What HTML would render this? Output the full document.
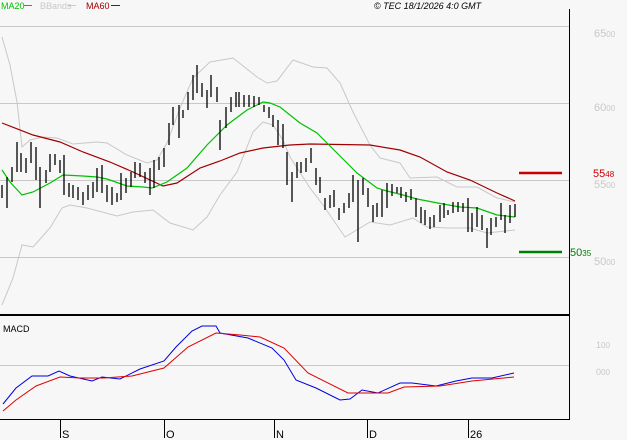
<!DOCTYPE html>
<html><head><meta charset="utf-8"><style>
html,body{margin:0;padding:0;background:#f7f7f7;}
svg{display:block;font-family:"Liberation Sans",sans-serif;}
</style></head><body>
<svg width="627" height="440" viewBox="0 0 627 440" xmlns="http://www.w3.org/2000/svg">
<rect width="627" height="440" fill="#f7f7f7"/>
<g font-size="9">
<text x="1" y="9" fill="#00c000">MA20</text><line x1="24" y1="5.5" x2="32" y2="5.5" stroke="#00c000"/>
<text x="40" y="9" fill="#c8c8c8">BBands</text><line x1="68" y1="5.5" x2="76" y2="5.5" stroke="#c8c8c8"/>
<text x="86" y="9" fill="#a00000">MA60</text><line x1="111" y1="5.5" x2="120" y2="5.5" stroke="#a00000"/>
<text x="374" y="9" fill="#000" font-style="italic">© TEC 18/1/2026 4:0 GMT</text>
</g>
<g stroke="#c8c8c8" stroke-width="1">
<line x1="0" y1="26.5" x2="569" y2="26.5"/>
<line x1="0" y1="103.5" x2="569" y2="103.5"/>
<line x1="0" y1="180.5" x2="569" y2="180.5"/>
<line x1="0" y1="257.5" x2="569" y2="257.5"/>
<line x1="0" y1="365.5" x2="569" y2="365.5"/>
</g>
<g fill="#c8c8c8" font-size="11">
<text x="594" y="37">65<tspan font-size="8">00</tspan></text>
<text x="594" y="111">60<tspan font-size="8">00</tspan></text>
<text x="594" y="188">55<tspan font-size="8">00</tspan></text>
<text x="594" y="265">50<tspan font-size="8">00</tspan></text>
<text x="596" y="348" font-size="9">1<tspan font-size="8">00</tspan></text>
<text x="596" y="375" font-size="9">0<tspan font-size="8">00</tspan></text>
</g>
<text x="593" y="177" fill="#c80000" font-size="11">55<tspan font-size="8">48</tspan></text>
<text x="570" y="256" fill="#008000" font-size="11">50<tspan font-size="8">35</tspan></text>
<line x1="519" y1="173" x2="562" y2="173" stroke="#c80000" stroke-width="2.5"/>
<line x1="519" y1="252" x2="562" y2="252" stroke="#008000" stroke-width="2.5"/>
<g fill="none" stroke="#c8c8c8" stroke-width="1">
<polyline points="2,37 10,65 17,102 22,147 30,140 43,137 57,138 73,144 97,142 107,143 127,155 147,163 157,160 167,143 180,108 193,78 210,62 233,58 257,77 267,83 277,81 293,60 313,67 327,68 340,83 353,112 370,145 380,158 400,163 410,178 437,177 457,187 477,187 497,198 515,202"/>
<polyline points="2,305 13,278 22,245 33,247 50,228 62,208 70,205 87,208 117,216 133,212 153,210 170,223 193,230 207,217 220,195 237,172 253,132 263,122 273,125 283,140 290,157 310,188 323,205 345,237 370,222 390,225 413,218 427,227 447,228 470,228 487,233 515,230"/>
</g>
<polyline fill="none" stroke="#a00000" stroke-width="1.2" points="2,123 33,135 60,142 83,152 110,162 133,172 163,186 177,183 200,168 220,161 240,153 263,148 290,145 310,144 370,145 400,150 420,157 447,172 470,180 497,193 515,201"/>
<polyline fill="none" stroke="#00c000" stroke-width="1.2" points="2,170 10,182 22,195 33,192 50,183 63,175 83,176 97,177 107,179 127,186 143,187 152,188 167,182 187,168 207,145 227,125 247,110 263,102 270,103 280,107 300,123 317,133 337,153 357,173 377,188 387,191 403,195 417,199 443,204 460,207 477,208 497,215 515,217"/>
<path stroke="#000" stroke-width="1.3" fill="none" d="
M2,185V198M7,177V208M12,167V182M17,142V172M21,153V172M26,158V173M31,142V163M36,147V180M40,167V208M46,170V183M50,154V172M55,154V165M60,160V173M64,155V195M69,183V197M73,185V198M78,187V200M83,192V205M88,185V200M93,182V198M97,168V192M102,165V193M107,185V202M112,187V205M117,193V202M121,173V200M126,178V193M131,172V187M135,162V178M140,163V177M145,172V183M150,168V195M154,160V188M159,157V170M164,148V167M169,123V145M173,107V125M179,105V138M183,110V118M188,92V110M193,75V100M197,65V93M202,83V97M207,90V108M211,75V97M217,87V102M220,120V150M226,107V128M231,97V112M236,92V107M239,92V107M244,95V107M249,95V107M254,96V107M259,97V105M264,105V112M269,107V118M273,115V127M278,120V145M283,124V148M287,152V185M292,172V202M297,162V178M301,162V173M306,158V172M311,148V163M316,168V185M320,177V193M325,198V210M330,195V208M334,190V207M339,208V220M344,203V213M349,193V208M353,175V202M358,180V242M363,178V195M368,188V207M373,205V222M377,203V217M382,190V217M387,183V208M392,184V196M397,187V193M401,187V198M406,192V202M411,189V200M416,198V217M421,207V223M425,210V225M430,217V229M434,215V227M440,205V222M444,203V218M448,210V215M453,202V213M458,202V212M463,203V212M468,198V232M472,213V232M477,207V227M482,215V230M487,228V248M491,218V235M496,217V227M501,203V220M505,215V233M510,205V223M515,204V217"/>
<line x1="0" y1="315" x2="569" y2="315" stroke="#000" stroke-width="2"/>
<line x1="0" y1="419.5" x2="569" y2="419.5" stroke="#000" stroke-width="1"/>
<line x1="569.5" y1="9" x2="569.5" y2="420" stroke="#000" stroke-width="1"/>
<text x="3" y="332" font-size="9" fill="#000">MACD</text>
<polyline fill="none" stroke="#0000e0" stroke-width="1" points="3,404 16,388 32,376 48,376 59,371 70,376 92,381 102,377 120,379 140,369 164,361 176,347 192,331 202,326 216,326 220,333 248,338 272,348 284,360 296,380 316,388 340,400 350,399 362,390 378,393 400,383 412,383 436,386 456,381 472,378 492,378 514,373"/>
<polyline fill="none" stroke="#e00000" stroke-width="1" points="3,411 16,400 36,386 60,377 80,378 104,378 132,376 164,368 188,347 216,333 240,335 260,337 284,348 308,373 348,393 388,393 404,387 440,386 472,381 514,377"/>
<g stroke="#000" stroke-width="1">
<line x1="60.5" y1="420" x2="60.5" y2="438"/>
<line x1="164.5" y1="420" x2="164.5" y2="438"/>
<line x1="274.5" y1="420" x2="274.5" y2="438"/>
<line x1="367.5" y1="420" x2="367.5" y2="438"/>
<line x1="468.5" y1="420" x2="468.5" y2="438"/>
</g>
<g font-size="11" fill="#000">
<text x="62" y="438">S</text>
<text x="166" y="438">O</text>
<text x="276" y="438">N</text>
<text x="369" y="438">D</text>
<text x="470" y="438">26</text>
</g>
</svg>
</body></html>
